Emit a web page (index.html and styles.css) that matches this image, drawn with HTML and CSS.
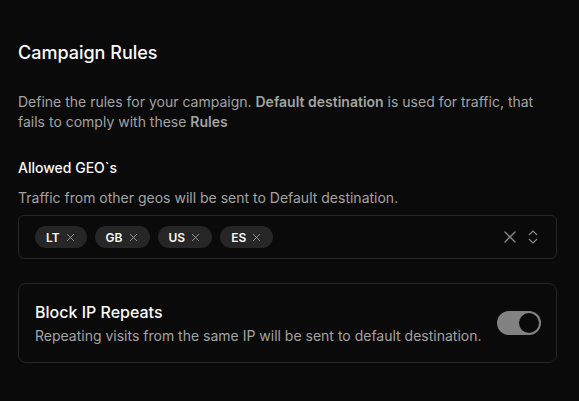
FILE: index.html
```html
<!DOCTYPE html>
<html lang="en">
<head>
    <meta charset="UTF-8">
    <meta name="viewport" content="width=device-width, initial-scale=1.0">
    <title>Campaign Rules</title>
    <link rel="stylesheet" href="styles.css">
</head>
<body>
    <div class="container">
        <h2 class="title">Campaign Rules</h2>
        <p class="intro">Define the rules for your campaign. <b>Default destination</b> is used for traffic, that fails to comply with these <b>Rules</b></p>

        <div class="field">
            <label class="label">Allowed GEO`s</label>
            <p class="hint">Traffic from other geos will be sent to Default destination.</p>
            <div class="select">
                <div class="chips">
                    <span class="chip">LT <svg class="chip-x" viewBox="0 0 24 24"><path d="M18 6 6 18M6 6l12 12"/></svg></span>
                    <span class="chip">GB <svg class="chip-x" viewBox="0 0 24 24"><path d="M18 6 6 18M6 6l12 12"/></svg></span>
                    <span class="chip">US <svg class="chip-x" viewBox="0 0 24 24"><path d="M18 6 6 18M6 6l12 12"/></svg></span>
                    <span class="chip">ES <svg class="chip-x" viewBox="0 0 24 24"><path d="M18 6 6 18M6 6l12 12"/></svg></span>
                </div>
                <div class="actions">
                    <svg class="clear" viewBox="0 0 24 24"><path d="M18 6 6 18M6 6l12 12"/></svg>
                    <svg class="chevrons" viewBox="0 0 24 24"><path d="m7 15 5 5 5-5M7 9l5-5 5 5"/></svg>
                </div>
            </div>
        </div>

        <div class="card">
            <div class="card-text">
                <div class="card-title">Block IP Repeats</div>
                <p class="hint">Repeating visits from the same IP will be sent to default destination.</p>
            </div>
            <div class="switch"><span class="thumb"></span></div>
        </div>
    </div>
</body>
</html>
```

FILE: styles.css
```css
body {
    margin: 0;
    background-color: #0a0a0a;
    color: #fafafa;
    font-family: 'Inter', 'Liberation Sans', sans-serif;
}
.container {
    width: 539px;
    padding: 39px 0 0 18px;
}
.title {
    margin: 0;
    font-size: 18px;
    line-height: 28px;
    font-weight: 500;
}
.intro {
    margin: 25px 0 0;
    font-size: 14px;
    line-height: 20px;
    color: #a3a3a3;
}
.intro b {
    font-weight: 600;
}
.field {
    margin-top: 26px;
}
.label {
    display: block;
    font-size: 14px;
    line-height: 20px;
    font-weight: 500;
}
.hint {
    margin: 0;
    font-size: 14px;
    line-height: 20px;
    color: #a3a3a3;
}
.field .hint {
    margin-top: 10px;
}
.select {
    margin-top: 7px;
    height: 44px;
    box-sizing: border-box;
    border: 1px solid #262626;
    border-radius: 6px;
    display: flex;
    align-items: center;
    justify-content: space-between;
    padding: 0 16px;
}
.chips {
    display: flex;
    gap: 8px;
}
.chip {
    display: flex;
    align-items: center;
    gap: 4px;
    height: 22px;
    padding: 0 10px 0 11px;
    border-radius: 11px;
    background-color: #262626;
    font-size: 12px;
    font-weight: 600;
}
.chip-x {
    width: 13px;
    height: 13px;
    fill: none;
    stroke: #a3a3a3;
    stroke-width: 1.6;
    stroke-linecap: round;
}
.actions {
    display: flex;
    align-items: center;
    gap: 4px;
    margin-right: -2px;
}
.clear, .chevrons {
    width: 20px;
    height: 20px;
    fill: none;
    stroke: #8a8a8a;
    stroke-width: 1.5;
    stroke-linecap: round;
    stroke-linejoin: round;
}
.chevrons {
    width: 18px;
    height: 18px;
}
.card {
    margin-top: 24px;
    border: 1px solid #262626;
    border-radius: 8px;
    padding: 16px;
    display: flex;
    align-items: center;
    justify-content: space-between;
}
.card-title {
    font-size: 16px;
    line-height: 24px;
    font-weight: 500;
    margin-bottom: 2px;
}
.switch {
    width: 44px;
    height: 24px;
    box-sizing: border-box;
    border-radius: 12px;
    background-color: #fafafa;
    opacity: 0.5;
    padding: 2px;
    display: flex;
    justify-content: flex-end;
    margin-right: -1px;
}
.thumb {
    width: 20px;
    height: 20px;
    border-radius: 50%;
    background-color: #0a0a0a;
}
```
